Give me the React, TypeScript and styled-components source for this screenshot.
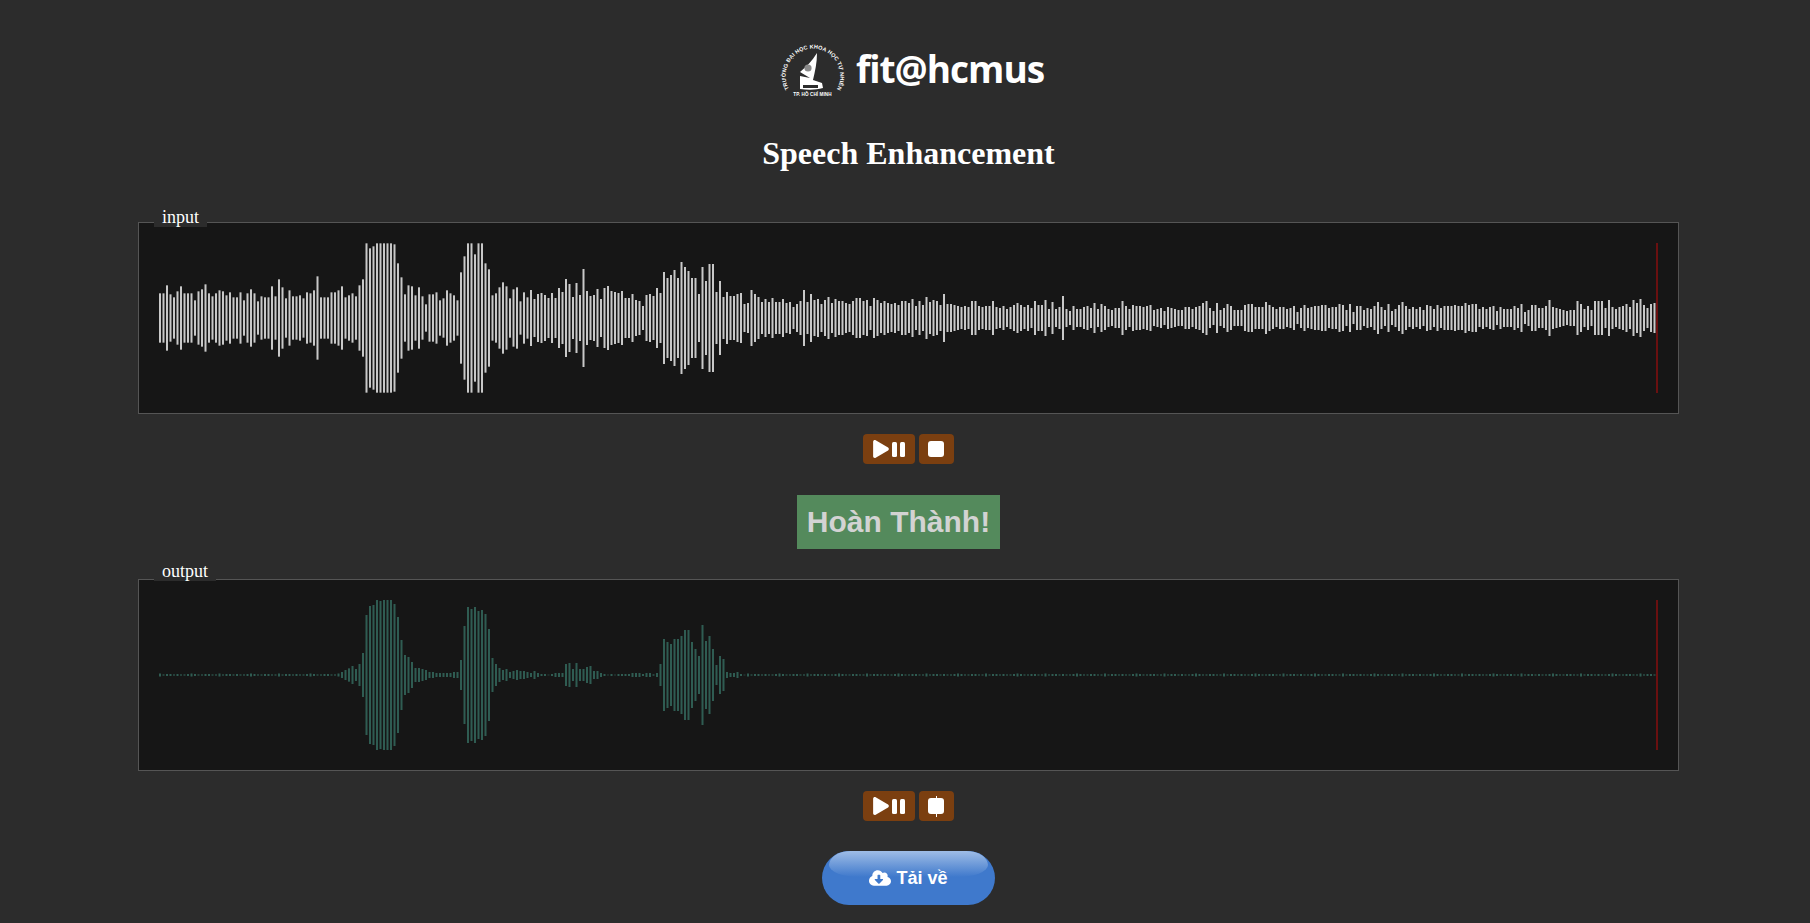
import React from 'react';
import styled, { createGlobalStyle } from 'styled-components';
import { FaPlay, FaCloudDownloadAlt } from 'react-icons/fa';

const BAR_STEP = 3.5;
const BAR_COUNT = 428;
const WAVE_WIDTH = 1499;
const WAVE_HEIGHT = 150;

// readings are bar tops measured on 3x crops, turned into half heights
const fromTops = (baseline: number, tops: number[]) => tops.map((top) => (baseline - top) / 3);

const INPUT_PEAKS = [
	...fromTops(353, [
		279, 279, 255, 282, 291, 273, 258, 279, 279, 279, 300, 273, 267, 252, 279, 288, 279, 270, 273, 285, 276, 291,
		291, 276, 300, 279, 267, 279, 303, 288, 291, 291, 258, 288, 237, 261, 294, 270, 288, 288, 285, 294, 276, 279,
		270, 228, 291, 291, 291, 276, 276, 270, 258, 291, 285, 279, 288, 255, 237, 129, 144, 138, 129, 129, 129, 129,
		129, 132, 189, 231, 282, 255, 258, 285, 261, 288, 312, 282, 282, 276, 300, 294, 270, 279, 285, 300, 216, 168,
		129, 129, 162, 129, 129, 189, 207, 285, 279, 261, 246, 258, 294, 267, 261, 303, 276, 291,
	]),
	...fromTops(294, [
		210, 237, 222, 219, 225, 234, 219, 234, 204, 216, 177, 192, 231, 189, 225, 147, 213, 228, 225, 207, 237, 204,
		198, 213, 216, 219, 213, 234, 234, 222, 240, 243, 258, 225, 222, 228, 204, 219, 156, 174, 165, 150, 174, 126,
		141, 153, 174, 174, 222, 141, 183, 132, 132, 216, 183, 231, 216, 228, 228, 222, 219, 252, 249, 210, 222, 231,
		246, 237, 246, 234, 246, 246, 237, 249, 246, 261, 252, 243, 210, 246, 222, 240, 237, 252, 240, 231, 249, 237,
		243, 243, 249, 252, 243, 234, 234, 243, 240, 258, 234, 240, 249, 243, 249, 252, 249, 255, 243, 243, 249, 237,
		258, 243, 255, 231,
	]),
	...fromTops(174, [
		126, 120, 123, 135, 102, 132, 132, 135, 138, 141, 138, 141, 123, 123, 138, 141, 138, 138, 123, 141, 144, 138,
		147, 141, 135, 129, 135, 141, 135, 144, 123, 135, 135, 120, 147, 126, 147, 141, 108, 147, 153, 138, 147, 147,
		141, 138, 144, 129, 147, 132, 138, 147, 150, 144, 144, 123, 138, 147, 135, 138, 138,
		141, 138, 135, 150, 147, 144, 153, 141, 144, 147, 150, 150, 141, 141, 147, 141, 138, 129, 123, 144, 153, 129,
		150, 144, 132, 138, 150, 150, 150, 135, 132, 132, 141, 141, 141, 126, 135, 141, 147, 141, 141, 147, 144, 138,
		156, 144, 135, 144, 141, 138, 138, 135, 135, 144, 141, 141, 132, 135, 150, 132, 156, 138,
	]),
	...fromTops(324, [
		288, 300, 294, 297, 288, 276, 291, 300, 282, 303, 297, 285, 276, 288, 297, 291, 297, 291, 300, 285, 288, 297,
		285, 294, 288, 288, 288, 285, 288, 288, 279, 285, 282, 282, 297, 291, 297, 291, 288, 303, 291, 297, 297, 297,
		288, 294, 282, 306, 300, 285, 285, 294, 294, 288, 270, 291, 294, 297, 300, 303, 300, 300, 273, 282, 297, 288,
		300, 273, 273, 273, 294, 270, 291, 297, 291, 288, 282, 291, 270, 279, 267, 285, 294, 282, 279,
	]),
];

const QUIET_PATTERN = [1.5, 0.6, 1, 1, 0.6, 1, 0.6, 0.6, 1, 1.5, 1, 0.6, 0.6, 1, 1, 0.6, 0.6];

const quiet = (count: number) => Array.from({ length: count }, (_, i) => QUIET_PATTERN[i % QUIET_PATTERN.length]);

const loud = [
	...fromTops(345, [
		336, 330, 325, 318, 327, 312, 279, 165, 138, 135, 120, 123, 120, 120, 120, 132, 171, 240, 285, 291, 306, 324,
		324, 327, 330, 336, 336, 339, 339, 339, 339, 339, 336, 336, 300, 198, 141, 147, 141, 153, 150, 162, 207, 294,
		312, 324, 330, 327, 336, 333, 330, 333, 333, 336, 339, 333, 339, 342, 342, 344, 342, 339, 339, 339, 312, 309,
		327, 309, 327, 327, 321, 318, 333, 333, 339, 342, 344, 342, 344, 342, 342, 342, 342,
	]),
	...fromTops(225, [
		219, 219, 219, 222, 219, 219, 223, 219, 192, 117, 126, 132, 117, 117, 108, 90, 90, 126, 147, 168, 75, 123, 108,
		147, 195, 168, 177, 216, 219, 219, 216, 222, 224,
	]),
];

const OUTPUT_PEAKS = [...quiet(52), ...loud, ...quiet(BAR_COUNT - 52 - loud.length)];

const Wave = ({ peaks, color }: { peaks: number[]; color: string }): JSX.Element => (
	<WaveSvg width={WAVE_WIDTH} height={WAVE_HEIGHT} viewBox={`0 0 ${WAVE_WIDTH} ${WAVE_HEIGHT}`}>
		{peaks.map((peak, i) => (
			<rect key={i} x={i * BAR_STEP} y={WAVE_HEIGHT / 2 - peak} width={2} height={peak * 2} fill={color} />
		))}
		<rect x={WAVE_WIDTH - 2} y={0} width={2} height={WAVE_HEIGHT} fill="#6a1010" />
	</WaveSvg>
);

const Seal = (): JSX.Element => (
	<SealSvg viewBox="0 0 80 60" width={80} height={60}>
		<defs>
			<path id="seal-ring" d="M14 49 A27.3 27.3 0 1 1 62 49" />
		</defs>
		<text fontFamily="Liberation Sans, sans-serif" fontWeight={700} fontSize={5.5} letterSpacing={0.12} fill="#fff">
			<textPath href="#seal-ring">TRƯỜNG ĐẠI HỌC KHOA HỌC TỰ NHIÊN</textPath>
		</text>
		<text x={37.5} y={56} textAnchor="middle" fontFamily="Liberation Sans, sans-serif" fontWeight={700} fontSize={4.6} letterSpacing={0.1} fill="#fff">
			TP. HỒ CHÍ MINH
		</text>
		<path d="M42 13 C37 21 31 27 25 32 L35 38 L25 36 L25 49 C33 50 41 50 48 48 L47 43 L38 40 C40 31 42 23 42 13 Z" fill="#fff" />
		<circle cx={33} cy={28} r={3.6} fill="#8a8a8a" />
		<rect x={28} y={45} width={15} height={3} fill="#2c2c2c" />
	</SealSvg>
);

const PauseIcon = (): JSX.Element => (
	<svg viewBox="0 0 13 15" width={13} height={15} fill="currentColor">
		<rect x={0} y={0} width={5} height={15} rx={1.5} />
		<rect x={8} y={0} width={5} height={15} rx={1.5} />
	</svg>
);

const StopIcon = (): JSX.Element => (
	<svg viewBox="0 0 16 16" width={16} height={16} fill="currentColor">
		<rect x={0} y={0} width={16} height={16} rx={3} />
	</svg>
);

const Controls = ({ cursor }: { cursor?: boolean }): JSX.Element => (
	<StyledControls>
		<StyledControl>
			<FaPlay size={18} />
			<PauseIcon />
		</StyledControl>
		<StyledControl $cursor={cursor}>
			<StopIcon />
		</StyledControl>
	</StyledControls>
);

const App = (): JSX.Element => (
	<>
		<GlobalStyle />
		<StyledPage>
			<StyledLogo>
				<Seal />
				<StyledWordmark>fit@hcmus</StyledWordmark>
			</StyledLogo>
			<StyledTitle>Speech Enhancement</StyledTitle>

			<StyledPanel>
				<StyledLegend $lift={16}>input</StyledLegend>
				<Wave peaks={INPUT_PEAKS} color="#c8c8c8" />
			</StyledPanel>
			<Controls />

			<StyledStatus>Hoàn Thành!</StyledStatus>

			<StyledPanel>
				<StyledLegend $lift={19}>output</StyledLegend>
				<Wave peaks={OUTPUT_PEAKS} color="#2f5c52" />
			</StyledPanel>
			<Controls cursor />

			<StyledDownload>
				<FaCloudDownloadAlt size={22} />
				<span>Tải về</span>
			</StyledDownload>
		</StyledPage>
	</>
);

export default App;

const GlobalStyle = createGlobalStyle`
	html, body {
		margin: 0;
		height: 100%;
		background: #2c2c2c;
		overflow: hidden;
	}
	body {
		font-family: 'Liberation Serif', serif;
		color: #fff;
	}
`;

const StyledPage = styled.div`
	width: 1541px;
	margin-left: 138px;
	padding-top: 40px;
	display: flex;
	flex-direction: column;
	align-items: center;
`;

const StyledLogo = styled.div`
	height: 60px;
	display: flex;
	align-items: center;
	gap: 1px;
	margin-left: 2px;
`;

const SealSvg = styled.svg`
	display: block;
`;

const StyledWordmark = styled.span`
	padding-bottom: 2px;
	font-family: 'Open Sans', sans-serif;
	font-weight: 700;
	font-size: 37px;
	line-height: 58px;
	letter-spacing: -1px;
	color: #fff;
`;

const StyledTitle = styled.h1`
	margin: 35px 0 50px;
	font-size: 32px;
	line-height: 37px;
	font-weight: 700;
`;

const StyledPanel = styled.div`
	position: relative;
	box-sizing: border-box;
	width: 100%;
	height: 192px;
	padding: 20px;
	border: 1px solid #555;
	background: #161616;
`;

const StyledLegend = styled.div<{ $lift: number }>`
	position: absolute;
	top: ${({ $lift }) => `-${$lift}px`};
	left: 15px;
	padding: 0 8px;
	background: #2c2c2c;
	font-size: 18px;
	line-height: 20px;
`;

const WaveSvg = styled.svg`
	display: block;
	overflow: visible;
`;

const StyledControls = styled.div`
	display: flex;
	gap: 4px;
	margin-top: 20px;
`;

const StyledControl = styled.button<{ $cursor?: boolean }>`
	position: relative;
	display: flex;
	align-items: center;
	gap: 2px;
	height: 30px;
	padding: 0 10px 0 9px;
	border: 0;
	border-radius: 4px;
	background: #7b3f10;
	color: #fff;

	${({ $cursor }) =>
		$cursor &&
		`&::after {
			content: '';
			position: absolute;
			top: 5px;
			left: 17px;
			width: 1px;
			height: 21px;
			background: #fff;
		}`}
`;

const StyledStatus = styled.div`
	margin: 31px 20px 30px 0;
	padding: 10px 9.5px;
	background: #548a5c;
	color: #d3d3d3;
	font-family: 'Liberation Sans', sans-serif;
	font-size: 30px;
	font-weight: 700;
	line-height: 34px;
`;

const StyledDownload = styled.button`
	position: relative;
	display: flex;
	align-items: center;
	justify-content: center;
	gap: 5px;
	width: 173px;
	height: 54px;
	margin-top: 30px;
	border: 0;
	border-radius: 27px;
	background: #3f79cc;
	color: #fff;
	font-family: 'Liberation Sans', sans-serif;
	font-size: 18px;
	font-weight: 700;

	&::before {
		content: '';
		position: absolute;
		top: 0;
		left: 7px;
		right: 7px;
		height: 26px;
		border-radius: 22px 22px 30px 30px / 14px 14px 12px 12px;
		background: linear-gradient(#9fbde6, rgba(63, 121, 204, 0.2));
	}

	& > * {
		position: relative;
	}
`;
